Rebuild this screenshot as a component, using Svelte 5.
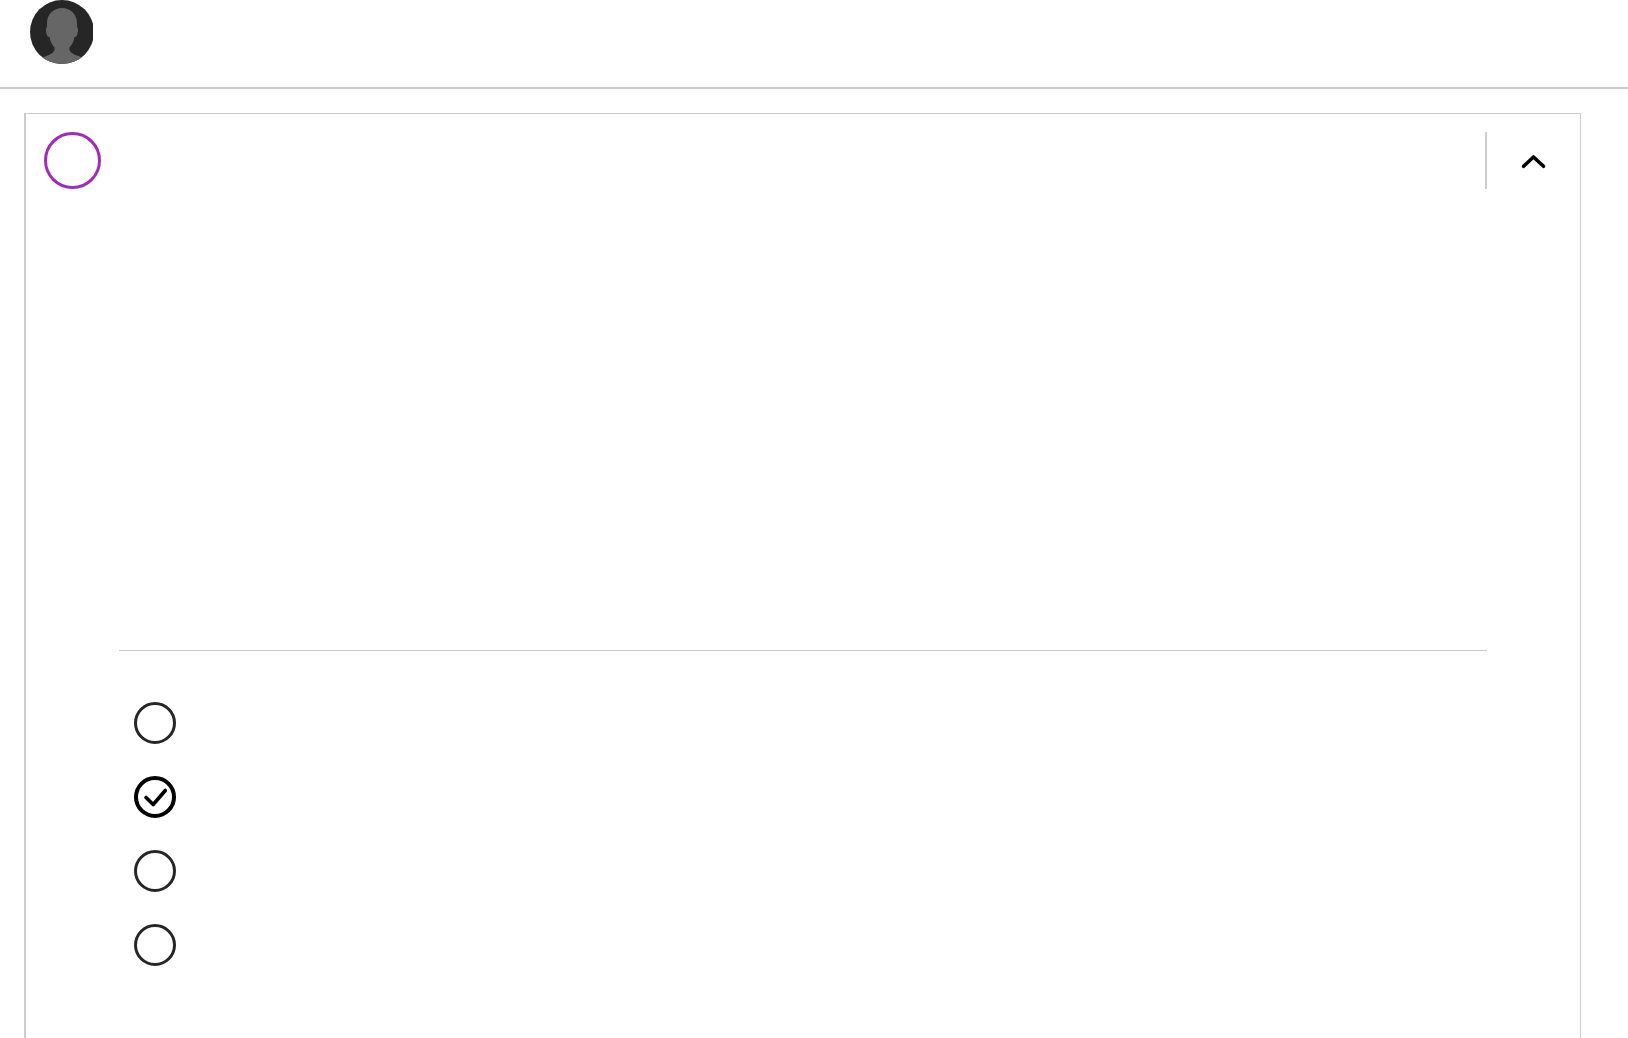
<script>
  let open = $state(true);
  let selected = $state(1);

  const answers = [0, 1, 2, 3];
</script>

<div class="page">
  <header class="topbar">
    <svg class="avatar" width="63" height="64" viewBox="0 0 63 64" role="img" aria-label="Profile">
      <clipPath id="avatar-clip"><circle cx="32" cy="32" r="32" /></clipPath>
      <g clip-path="url(#avatar-clip)">
        <rect width="63" height="64" fill="#262626" />
        <path
          fill="#666"
          d="M32 8C23.500 8 17 14.500 17 23V27C15.500 28 16 31 16.500 34C17 36 18 37 19.500 37C20 41 22 45 24.500 47.500C26 53 18 55.500 12 57.500V64H53V57.500C46 55.500 38 53 39.500 47.500C42 45 44 41 44.500 37C46.500 37 47.500 35 48 31C48 29 48 28 47 27V23C47 14.500 40.500 8 32 8Z"
        />
      </g>
    </svg>
  </header>

  <main class="card">
    <div class="card-head">
      <span class="number"></span>
      <button
        class="toggle"
        type="button"
        aria-label="Toggle question"
        aria-expanded={open}
        onclick={() => (open = !open)}
      >
        <svg class:closed={!open} width="26" height="16" viewBox="0 0 26 16" aria-hidden="true">
          <path d="M2.600 13.300L12.500 4L22.500 13.300" />
        </svg>
      </button>
    </div>

    {#if open}
      <div class="card-body">
        <div class="prompt"></div>
        <div class="answers" role="radiogroup" aria-label="Answers">
          {#each answers as answer}
            <label class="answer">
              <input
                type="radio"
                name="answer"
                value={answer}
                aria-label={`Answer ${answer + 1}`}
                bind:group={selected}
              />
              {#if selected === answer}
                <svg width="42" height="42" viewBox="0 0 42 42" aria-hidden="true">
                  <path d="M12 21.500L19.200 28.500L31.300 14.500" />
                </svg>
              {/if}
            </label>
          {/each}
        </div>
      </div>
    {/if}
  </main>
</div>

<style>
  :global(body) {
    margin: 0;
    background: #fff;
    font-family: "Open Sans", sans-serif;
  }

  .page {
    display: flex;
    flex-direction: column;
    min-height: 100vh;
  }

  .topbar {
    padding: 0 30px 23px;
    border-bottom: 2px solid #ccc;
  }

  .avatar {
    display: block;
  }

  .card {
    flex: 1;
    margin: 24px 47px 0 24px;
    border: 1px solid #ccc;
    border-left-width: 2px;
    border-bottom: none;
  }

  .card-head {
    display: flex;
    justify-content: space-between;
    padding: 18px 0 0 18px;
  }

  .number {
    box-sizing: border-box;
    width: 57px;
    height: 57px;
    border: 3px solid #a12cb5;
    border-radius: 50%;
  }

  .toggle {
    display: flex;
    align-items: center;
    justify-content: center;
    width: 95px;
    padding: 0;
    border: none;
    border-left: 2px solid #ccc;
    background: none;
    cursor: pointer;
  }

  .toggle svg,
  .answer svg {
    fill: none;
    stroke: #000;
    stroke-width: 3.6;
    stroke-linecap: round;
    stroke-linejoin: round;
  }

  .toggle .closed {
    transform: rotate(180deg);
  }

  .card-body {
    padding: 0 93px;
  }

  .prompt {
    min-height: 461px;
    border-bottom: 1px solid #ccc;
  }

  .answers {
    display: flex;
    flex-direction: column;
    align-items: flex-start;
    gap: 32px;
    padding: 51px 15px;
  }

  .answer {
    display: grid;
    cursor: pointer;
  }

  .answer input,
  .answer svg {
    grid-area: 1 / 1;
  }

  .answer input {
    box-sizing: border-box;
    appearance: none;
    width: 42px;
    height: 42px;
    margin: 0;
    border: 3px solid #262626;
    border-radius: 50%;
    cursor: pointer;
  }

  .answer input:checked {
    border: 4px solid #000;
  }

  .answer svg {
    pointer-events: none;
  }
</style>
